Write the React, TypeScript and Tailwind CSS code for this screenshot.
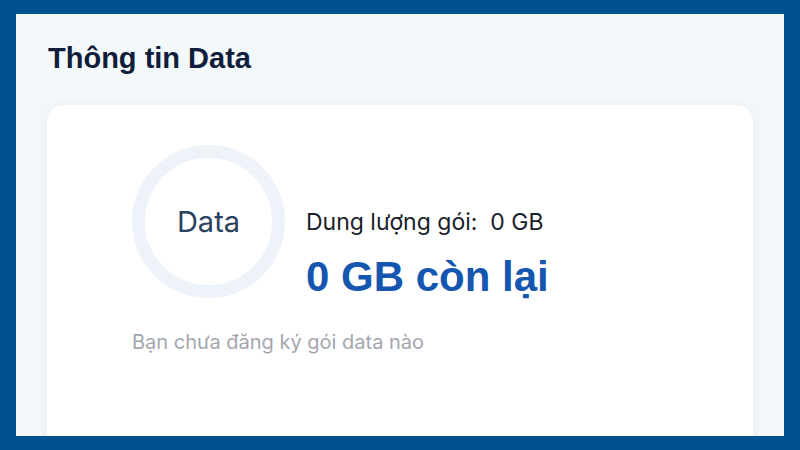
export default function App() {
    return (
        <div className="w-[800px] h-[450px] bg-[#01508f] pt-[14px] pb-[14px] px-[16px]">
            <div className="h-full bg-[#f3f8fb] overflow-hidden flex flex-col">
                <h1 className="pl-[32px] pt-[27px] text-[29px] leading-[34px] font-bold text-[#101d3b] font-['Liberation_Sans',sans-serif]">
                    Thông tin Data
                </h1>
                <div className="mt-[30px] mx-[31px] flex-1 -mb-[40px] rounded-2xl bg-white shadow-[0_0_12px_rgba(200,215,235,0.35)] pt-[40px] pl-[85px]">
                    <div className="flex items-start gap-[21px]">
                        <div className="w-[153px] h-[153px] shrink-0 rounded-full border-[13px] border-[#eef3fa] flex items-center justify-center">
                            <span className="text-[29px] leading-[34px] text-[#2a4160] font-['Inter',sans-serif]">Data</span>
                        </div>
                        <div className="flex flex-col pt-[63px]">
                            <p className="text-[23px] leading-[28px] text-[#1a1d2a] font-['Inter',sans-serif]">
                                Dung lượng gói:&nbsp; 0 GB
                            </p>
                            <p className="mt-[17px] text-[42px] leading-[48px] font-bold text-[#1557b0] font-['Liberation_Sans',sans-serif]">
                                0 GB còn lại
                            </p>
                        </div>
                    </div>
                    <p className="mt-[27px] text-[20px] leading-[28px] text-[#a3a7ad] font-['Inter',sans-serif]">
                        Bạn chưa đăng ký gói data nào
                    </p>
                </div>
            </div>
        </div>
    )
}
